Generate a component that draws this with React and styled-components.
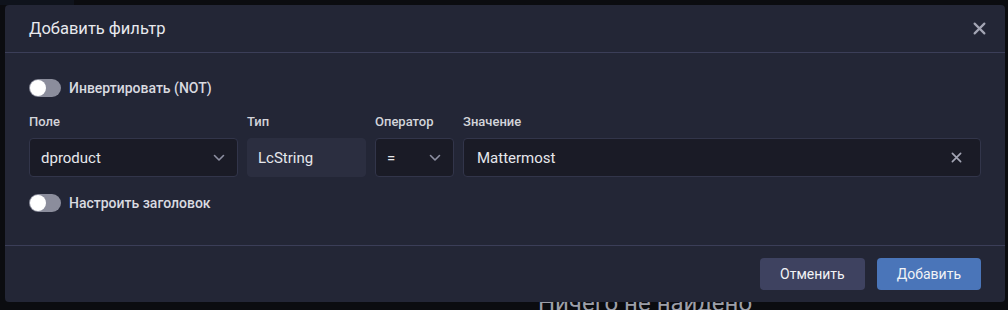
import React, { useState } from "react";
import styled, { createGlobalStyle } from "styled-components";

const Global = createGlobalStyle`
  html, body { margin: 0; padding: 0; background: #0b0c10; }
  body { font-family: Roboto, "Noto Sans", "Liberation Sans", sans-serif; }
  * { box-sizing: border-box; }
`;

const Page = styled.div`
  position: relative;
  width: 1008px;
  height: 310px;
  overflow: hidden;
  background: #0b0c10;
`;

const TopBar = styled.div`
  display: flex;
  height: 5px;
`;

const TopTab = styled.div`
  width: 74px;
  background: #0f131c;
`;

const EmptyArea = styled.div`
  display: flex;
  justify-content: center;
  padding-left: 282px;
  padding-top: 284px;
`;

const EmptyText = styled.div`
  font-size: 24px;
  color: #9c9ea8;
  line-height: 28px;
`;

const Overlay = styled.div`
  position: absolute;
  inset: 0;
  padding: 5px 3px 0 5px;
`;

const Modal = styled.div`
  width: 1000px;
  background: #232636;
  border-radius: 4px;
  display: flex;
  flex-direction: column;
`;

const Header = styled.div`
  height: 48px;
  display: flex;
  align-items: center;
  justify-content: space-between;
  padding: 0 18px 0 24px;
  border-bottom: 1px solid #3b3e58;
`;

const Title = styled.div`
  font-size: 16.5px;
  color: #e8e9ee;
`;

const IconButton = styled.button`
  background: none;
  border: 0;
  padding: 0;
  width: 16px;
  height: 16px;
  display: flex;
  align-items: center;
  justify-content: center;
  color: #a3a5b4;
  cursor: pointer;
`;

const Body = styled.div`
  padding: 23px 24px 30px;
  display: flex;
  flex-direction: column;
  gap: 14px;
`;

const ToggleRow = styled.label`
  display: flex;
  align-items: center;
  gap: 8px;
  height: 24px;
  font-size: 14px;
  font-weight: 500;
  color: #d9dae0;
  cursor: pointer;
`;

const Track = styled.span`
  position: relative;
  width: 32px;
  height: 18px;
  border-radius: 9px;
  background: ${(p) => (p.$on ? "#4a75b9" : "#8b8d9c")};
  flex-shrink: 0;
`;

const Knob = styled.span`
  position: absolute;
  top: 1px;
  left: ${(p) => (p.$on ? "15px" : "1px")};
  width: 16px;
  height: 16px;
  border-radius: 50%;
  background: #ffffff;
`;

const FieldsGrid = styled.div`
  display: grid;
  grid-template-columns: 209px 119px 79px 1fr;
  column-gap: 9px;
  row-gap: 8px;
`;

const FieldLabel = styled.div`
  font-size: 13px;
  font-weight: 500;
  line-height: 16px;
  color: #d3d4da;
`;

const Control = styled.div`
  height: 39px;
  display: flex;
  align-items: center;
  justify-content: space-between;
  padding: 0 ${(p) => p.$pr || 12}px 0 ${(p) => p.$pl || 11}px;
  border-radius: 4px;
  background: ${(p) => (p.$disabled ? "#2b2e40" : "#1a1b26")};
  border: 1px solid ${(p) => (p.$disabled ? "#2b2e40" : "#32354a")};
  font-size: 15px;
  font-weight: 400;
  color: #e6e7ec;
`;

const Footer = styled.div`
  height: 57px;
  display: flex;
  align-items: center;
  justify-content: flex-end;
  gap: 12px;
  padding: 0 24px 1px;
  border-top: 1px solid #3b3e58;
`;

const Button = styled.button`
  height: 32px;
  padding: 0 20px;
  border: 0;
  border-radius: 4px;
  font-family: inherit;
  font-size: 14px;
  color: #f2f3f6;
  background: ${(p) => (p.$primary ? "#4a75b9" : "#3e4260")};
  cursor: pointer;
`;

const Chevron = () => (
  <svg width="12" height="8" viewBox="0 0 12 8" fill="none">
    <path d="M1.5 1.5 L6 6 L10.5 1.5" stroke="#8e90a2" strokeWidth="1.6" strokeLinecap="round" strokeLinejoin="round" />
  </svg>
);

const Cross = ({ size = 12, color = "currentColor", w = 2 }) => (
  <svg width={size} height={size} viewBox="0 0 12 12" fill="none">
    <path d="M1.5 1.5 L10.5 10.5 M10.5 1.5 L1.5 10.5" stroke={color} strokeWidth={w} strokeLinecap="round" />
  </svg>
);

const Toggle = ({ label }) => {
  const [on, setOn] = useState(false);
  return (
    <ToggleRow onClick={() => setOn(!on)}>
      <Track $on={on}>
        <Knob $on={on} />
      </Track>
      {label}
    </ToggleRow>
  );
};

export default function App() {
  return (
    <Page>
      <Global />
      <TopBar>
        <TopTab />
      </TopBar>
      <EmptyArea>
        <EmptyText>Ничего не найдено</EmptyText>
      </EmptyArea>
      <Overlay>
        <Modal>
          <Header>
            <Title>Добавить фильтр</Title>
            <IconButton aria-label="close">
              <Cross size={13} />
            </IconButton>
          </Header>
          <Body>
            <Toggle label="Инвертировать (NOT)" />
            <FieldsGrid>
              <FieldLabel>Поле</FieldLabel>
              <FieldLabel>Тип</FieldLabel>
              <FieldLabel>Оператор</FieldLabel>
              <FieldLabel>Значение</FieldLabel>
              <Control $pr={12}>
                dproduct
                <Chevron />
              </Control>
              <Control $disabled $pl={10}>LcString</Control>
              <Control $pr={12}>
                =
                <Chevron />
              </Control>
              <Control $pl={13} $pr={18}>
                Mattermost
                <Cross size={11} color="#a3a5b4" w={1.8} />
              </Control>
            </FieldsGrid>
            <Toggle label="Настроить заголовок" />
          </Body>
          <Footer>
            <Button>Отменить</Button>
            <Button $primary>Добавить</Button>
          </Footer>
        </Modal>
      </Overlay>
    </Page>
  );
}
